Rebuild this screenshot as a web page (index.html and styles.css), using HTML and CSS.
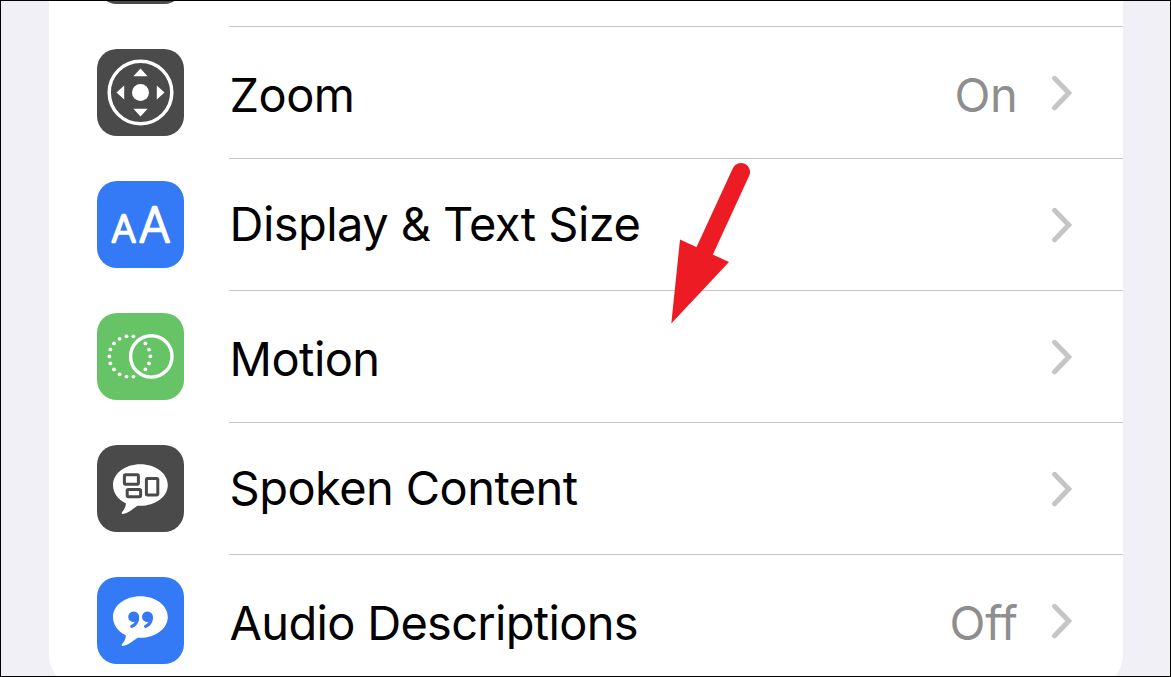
FILE: index.html
```
<!DOCTYPE html>
<html lang="en">
<head>
    <meta charset="UTF-8">
    <meta name="viewport" content="width=device-width, initial-scale=1.0">
    <title>Accessibility Settings</title>
    <link rel="stylesheet" href="styles.css">
</head>
<body>
    <main class="screen">
        <ul class="card">
            <li class="row">
                <div class="icon dark"></div>
                <div class="content"></div>
            </li>

            <li class="row">
                <svg class="icon dark" viewBox="0 0 87 87">
                    <circle cx="43.5" cy="43.5" r="31.3" fill="none" stroke="#fff" stroke-width="3.5"/>
                    <circle cx="43.5" cy="43.5" r="8.5" fill="#fff"/>
                    <path d="M43.5 19.5L50.6 27.2H36.4zM43.5 67.5L50.6 59.8H36.4zM19.5 43.5L27.2 36.4V50.6zM67.5 43.5L59.8 36.4V50.6z" fill="#fff"/>
                </svg>
                <div class="content">
                    <span class="label">Zoom</span>
                    <span class="value">On</span>
                    <svg class="chevron" viewBox="0 0 22 36"><path d="M4.6 3.3L18.8 18L4.6 32.7"/></svg>
                </div>
            </li>

            <li class="row raised">
                <svg class="icon blue" viewBox="0 0 87 87">
                    <text class="letter" x="14.6" y="61" font-size="37" textLength="24.4" lengthAdjust="spacingAndGlyphs">A</text>
                    <text class="letter" x="42" y="61" font-size="48" textLength="31.2" lengthAdjust="spacingAndGlyphs">A</text>
                </svg>
                <div class="content">
                    <span class="label">Display &amp; Text Size</span>
                    <svg class="chevron" viewBox="0 0 22 36"><path d="M4.6 3.3L18.8 18L4.6 32.7"/></svg>
                </div>
            </li>

            <li class="row">
                <svg class="icon green" viewBox="0 0 87 87">
                    <circle cx="54.3" cy="43.4" r="20.7" fill="none" stroke="#fff" stroke-width="3.4"/>
                    <g fill="#fff">
                        <circle cx="29.5" cy="23.3" r="1.9"/>
                        <circle cx="36.4" cy="23.3" r="1.9"/>
                        <circle cx="22.6" cy="25.8" r="1.9"/>
                        <circle cx="17" cy="30.4" r="1.9"/>
                        <circle cx="13.4" cy="36.4" r="1.9"/>
                        <circle cx="12.3" cy="43.4" r="1.9"/>
                        <circle cx="13.4" cy="50.4" r="1.9"/>
                        <circle cx="17" cy="56.4" r="1.9"/>
                        <circle cx="22.6" cy="61.3" r="1.9"/>
                        <circle cx="29.5" cy="63.6" r="1.9"/>
                        <circle cx="36.4" cy="63.6" r="1.9"/>
                        <circle cx="48.4" cy="30.4" r="1.9"/>
                        <circle cx="52" cy="36.6" r="1.9"/>
                        <circle cx="53.4" cy="43.4" r="1.9"/>
                        <circle cx="52" cy="50.4" r="1.9"/>
                        <circle cx="48.4" cy="56.4" r="1.9"/>
                    </g>
                </svg>
                <div class="content">
                    <span class="label">Motion</span>
                    <svg class="chevron" viewBox="0 0 22 36"><path d="M4.6 3.3L18.8 18L4.6 32.7"/></svg>
                </div>
            </li>

            <li class="row raised">
                <svg class="icon dark" viewBox="0 0 87 87">
                    <path d="M43.4 19.2C58.5 19.2 70.8 28.4 70.8 40S58.5 60.8 43.4 60.8H40.8C36.5 63 31.5 68.4 25.8 69C24.4 69.1 24.5 67.8 25.3 66.8C27.2 64.4 29 61.8 28.8 58.2C21 54.5 16 48 16 40C16 28.4 28.3 19.2 43.4 19.2z" fill="#fff"/>
                    <g fill="none" stroke="#4a4a4a" stroke-width="3">
                        <rect x="27.4" y="29.8" width="14" height="9.4" rx="1.2"/>
                        <rect x="30.2" y="44.4" width="13.4" height="7.4" rx="1.2"/>
                        <rect x="49.4" y="33.4" width="11.4" height="16.6" rx="1.2"/>
                    </g>
                </svg>
                <div class="content">
                    <span class="label">Spoken Content</span>
                    <svg class="chevron" viewBox="0 0 22 36"><path d="M4.6 3.3L18.8 18L4.6 32.7"/></svg>
                </div>
            </li>

            <li class="row">
                <svg class="icon blue" viewBox="0 0 87 87">
                    <path d="M43.4 19.2C58.5 19.2 70.8 28.4 70.8 40S58.5 60.8 43.4 60.8H40.8C36.5 63 31.5 68.4 25.8 69C24.4 69.1 24.5 67.8 25.3 66.8C27.2 64.4 29 61.8 28.8 58.2C21 54.5 16 48 16 40C16 28.4 28.3 19.2 43.4 19.2z" fill="#fff"/>
                    <g fill="#347af6">
                        <path d="M36.6 34.6A5.5 5.5 0 0 1 42.2 40.6C42.2 46 38.9 49.7 35.3 50.8C33.3 51.4 32.5 48.7 34.2 47.9C35.9 47.1 37.1 46.2 37.8 44.8A5.2 5.2 0 1 1 36.6 34.6z"/>
                        <path d="M50.4 34.6A5.5 5.5 0 0 1 56 40.6C56 46 52.7 49.7 49.1 50.8C47.1 51.4 46.3 48.7 48 47.9C49.7 47.1 50.9 46.2 51.6 44.8A5.2 5.2 0 1 1 50.4 34.6z"/>
                    </g>
                </svg>
                <div class="content">
                    <span class="label tight">Audio Descriptions</span>
                    <span class="value">Off</span>
                    <svg class="chevron" viewBox="0 0 22 36"><path d="M4.6 3.3L18.8 18L4.6 32.7"/></svg>
                </div>
            </li>
        </ul>

        <!-- arrow pointing at the Motion row -->
        <svg class="arrow" viewBox="0 0 80 162">
            <path d="M71 10L34.4 89.4" fill="none" stroke="#ed1c24" stroke-width="18" stroke-linecap="round"/>
            <path d="M1.3 161.5L10 77.5L59 100z" fill="#ed1c24"/>
        </svg>
    </main>
</body>
</html>
```
FILE: styles.css
```
* {
    box-sizing: border-box;
}
body {
    margin: 0;
    font-family: Inter, "Liberation Sans", sans-serif;
}
.screen {
    position: relative;
    height: 677px;
    padding: 0 47px 0 48px;
    border: 1px solid #000;
    background-color: #f1f0f6;
    overflow: hidden;
}
.card {
    list-style: none;
    margin: -106px 0 0;
    padding: 0 0 0 48px;
    background-color: #fff;
    border-radius: 32px;
}
.row {
    display: flex;
    height: 132px;
}
.icon {
    flex: none;
    width: 87px;
    height: 87px;
    margin: 22px 45px 0 0;
    border-radius: 20px;
}
.dark {
    background-color: #4a4a4a;
}
.blue {
    background-color: #347af6;
}
.green {
    background-color: #67c466;
}
.letter {
    fill: #fff;
    stroke: #fff;
    stroke-width: 2.6px;
    stroke-linejoin: round;
    font-weight: 200;
}
.content {
    flex: 1;
    display: flex;
    align-items: flex-start;
    padding: 38px 51px 0 0.6px;
    border-bottom: 1px solid #c6c6c8;
    font-size: 47px;
    line-height: 60px;
}
.row:last-child .content {
    border-bottom: none;
}
.label {
    color: #000;
    letter-spacing: -0.57px;
    white-space: nowrap;
}
.tight {
    letter-spacing: -0.7px;
}
.raised .label {
    margin-top: -3px;
}
.value {
    margin-left: auto;
    color: #8e8e8e;
    letter-spacing: -0.3px;
}
.chevron {
    width: 22px;
    height: 36px;
    margin: 10px 0 0 auto;
    fill: none;
    stroke: #c5c5c7;
    stroke-width: 5;
    stroke-linecap: round;
}
.value + .chevron {
    margin-left: 32.5px;
}
.arrow {
    position: absolute;
    left: 669px;
    top: 161px;
    width: 80px;
    height: 162px;
}
```
